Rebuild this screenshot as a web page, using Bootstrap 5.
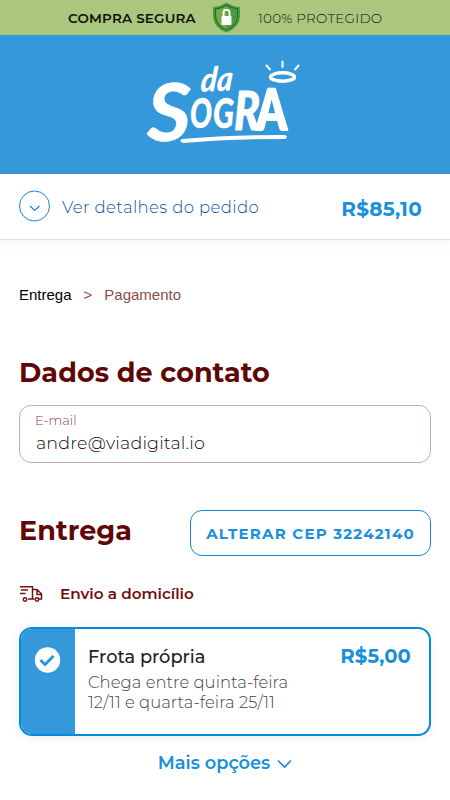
<!DOCTYPE html>
<html lang="pt-BR">
<head>
<meta charset="utf-8">
<meta name="viewport" content="width=device-width, initial-scale=1">
<title>Da Sogra - Entrega</title>
<link href="https://cdn.jsdelivr.net/npm/bootstrap@5.3.0/dist/css/bootstrap.min.css" rel="stylesheet">
<style>
body{font-family:Montserrat,Inter,"Noto Sans",sans-serif;color:#600606;height:800px;overflow:hidden;background:#fff}
svg{display:block;flex-shrink:0;overflow:visible}
.t{white-space:nowrap;display:block;line-height:20px}
.secure-bar{height:35px;background:#abc77d;color:#111;font-size:13.5px;padding-left:68px}
.secure-bar .t:first-child{width:128px;font-weight:600;letter-spacing:.18px}
.secure-bar .t:last-child{font-weight:300;letter-spacing:.25px}
.brand-area{height:139px;background:#3498db;padding:20px 0 0 140px}
.summary{height:66px;border-bottom:1px solid #e6dede;box-shadow:0 3px 12px rgba(90,40,20,.05);padding:0 28px 0 19px}
.summary-label{font-size:16.5px;font-weight:300;letter-spacing:.38px;color:#0d55a5}
.amount{color:#1a8fdc;font-weight:700;font-size:20px;letter-spacing:.25px}
.steps{font-family:"Liberation Sans",Arial,sans-serif;font-size:15px;color:#8f4b4b;padding-top:45px}
.main-area{padding:0 19px}
.heading{font-size:27px;font-weight:700;line-height:36px;letter-spacing:.06px}
.contact-heading{margin:50px 0 14px}
.field{height:58px;border:1px solid #cba9a9;border-radius:12px;padding:4px 16px}
.field .field-label{font-size:13px;font-weight:300;color:#853f3f;margin-left:-1px}
.field .email{font-size:17.5px;font-weight:300;color:#160808;line-height:26px;letter-spacing:.16px}
.delivery-row{margin-top:47px}
.entrega{padding-top:3px}
.cep{height:46px;width:241px;border:1px solid #1683d4;border-radius:12px;color:#1a8fdc;font-size:15px;font-weight:700;letter-spacing:1.2px;padding:2px 0 0}
.cep:hover{color:#1683d4}
.method{margin-top:26px;height:23px;gap:17px;font-size:15.25px;font-weight:600;color:#720c0c}
.option{margin-top:22px;height:109px;border:2px solid #058bdc;border-radius:13px;box-shadow:0 1px 10px rgba(90,40,20,.09);overflow:hidden}
.option-mark{width:54px;background:#3498db;padding:18px 0 0 13px;flex-shrink:0}
.option-copy{padding:18px 18px 0 13px}
.option-title{font-size:17.8px;font-weight:500;color:#222}
.option-copy .amount{font-size:19.6px;letter-spacing:.1px;margin-top:-1px}
.option-info{padding-top:5px;font-size:16.4px;font-weight:300;color:#444;letter-spacing:.05px}
.more{margin-top:17px;gap:7px;color:#1a8fdc;font-size:17.8px;font-weight:600}
</style>
<script src="https://cdn.jsdelivr.net/npm/bootstrap@5.3.0/dist/js/bootstrap.bundle.min.js"></script>
</head>
<body>
<div class="secure-bar d-flex align-items-center">
  <span class="t">COMPRA SEGURA</span>
  <svg class="ms-3 me-3" width="30" height="32" viewBox="0 0 30 32"><path d="M14.500 .5Q20.500 4.500 28 5V14.500Q27.500 25.500 14.500 30.500Q1.500 25.500 1 14.500V5Q8.500 4.500 14.500 .5Z" fill="#4b9b3d"/><path d="M14.500 3Q19.500 6.500 25.500 6.800V14.500Q25 23.500 14.500 28Q4 23.500 3.500 14.500V6.800Q9.500 6.500 14.500 3Z" fill="#75ab40" stroke="#1c6f3b" stroke-width="1.200"/><path d="M14.500 3.800Q19.500 7 24.900 7.500V14.500Q24.500 23 14.500 27.300Z" fill="#4a9c42"/><path d="M11.500 15V10.500Q11.500 7.800 14.500 7.800Q17.500 7.800 17.500 10.500V15" fill="none" stroke="#fff" stroke-width="2"/><rect x="9.500" y="14" width="10" height="9" rx="1" fill="#fff"/></svg>
  <span class="t">100% PROTEGIDO</span>
</div>
<header class="brand-area">
  <svg width="170" height="95" viewBox="0 0 170 95" fill="#fff" font-family="Lato,sans-serif" font-weight="900" font-style="italic" role="img" aria-label="da Sogra">
    <g stroke="#fff" stroke-linejoin="round" stroke-linecap="round">
    <text x="0" y="0" font-size="34" stroke-width="0" textLength="32" lengthAdjust="spacingAndGlyphs" transform="translate(60 37) rotate(-3) skewX(-8)">da</text>
    <text x="7" y="86" font-size="81" stroke-width=".5" textLength="44" lengthAdjust="spacingAndGlyphs" font-weight="700">S</text>
    <text x="50" y="73" font-size="41" stroke-width=".4" textLength="22" lengthAdjust="spacingAndGlyphs">O</text>
    <text x="73" y="73" font-size="41" stroke-width=".4" textLength="21" lengthAdjust="spacingAndGlyphs">G</text>
    <text x="94" y="75" font-size="53" stroke-width=".8" textLength="26" lengthAdjust="spacingAndGlyphs">R</text>
    <text x="118" y="75" font-size="57" stroke-width="2" textLength="31" lengthAdjust="spacingAndGlyphs" transform="translate(118 75) skewX(6) translate(-118 -75)">A</text>
    </g>
    <path d="M42 84Q90 80 145 80Q149 82 145 84Q90 84 43 88Q38 86 42 84Z"/>
    <ellipse cx="142.500" cy="22" rx="12" ry="4.200" fill="none" stroke="#fff" stroke-width="3.500"/>
    <path d="M126.500 10.500L130 14.500M142.500 6.500V12M158.500 10.500L155 14.500" stroke="#fff" stroke-width="2" stroke-linecap="round"/>
  </svg>
</header>
<section class="summary d-flex align-items-center">
  <svg width="31" height="31" viewBox="0 0 31 31" fill="none" stroke="#1683d4"><circle cx="15.500" cy="15" r="15"/><path d="M11 15L15.700 19.500L20.500 15" stroke-width="1.200"/></svg>
  <span class="t summary-label ms-2 ps-1">Ver detalhes do pedido</span>
  <span class="t amount ms-auto pt-1">R$85,10</span>
</section>
<main class="main-area">
  <nav class="steps d-flex"><span class="t text-black">Entrega</span><span class="t px-2 mx-1">&gt;</span><span class="t">Pagamento</span></nav>
  <h2 class="heading contact-heading">Dados de contato</h2>
  <div class="field"><label class="t field-label">E-mail</label><span class="t email">andre@viadigital.io</span></div>
  <div class="delivery-row d-flex justify-content-between"><h2 class="heading mb-0 entrega">Entrega</h2><button class="btn cep">ALTERAR CEP 32242140</button></div>
  <div class="method d-flex align-items-center">
    <svg width="24" height="18" viewBox="0 0 24 18" fill="none" stroke="#721414" stroke-width="1.500"><path d="M1 1.750H13.500V14H9M13.500 4.500H18L22.500 9V14H20M14 14H15.500M18 5V9.500H22M2 5H9M1 8.500H6.500"/><circle cx="6" cy="14.500" r="1.700"/><circle cx="18" cy="14.500" r="1.700"/></svg>
    <span class="t">Envio a domicílio</span>
  </div>
  <div class="option d-flex">
    <div class="option-mark"><svg width="27" height="27" viewBox="0 0 27 27"><circle cx="13.500" cy="13" r="12.700" fill="#fff"/><path d="M6.500 13L11 17.500L19.500 9" fill="none" stroke="#2797dd" stroke-width="3"/></svg></div>
    <div class="option-copy flex-grow-1"><div class="d-flex justify-content-between"><span class="t option-title">Frota própria</span><span class="t amount">R$5,00</span></div><div class="option-info"><span class="t">Chega entre quinta-feira</span><span class="t">12/11 e quarta-feira 25/11</span></div></div>
  </div>
  <div class="more d-flex justify-content-center align-items-center"><span class="t">Mais opções</span><svg width="15" height="10" viewBox="0 0 15 10" fill="none" stroke="#1a8fdc" stroke-width="1.700"><path d="M1 2.500L7.500 9L14 2.500"/></svg></div>
</main>
</body>
</html>
